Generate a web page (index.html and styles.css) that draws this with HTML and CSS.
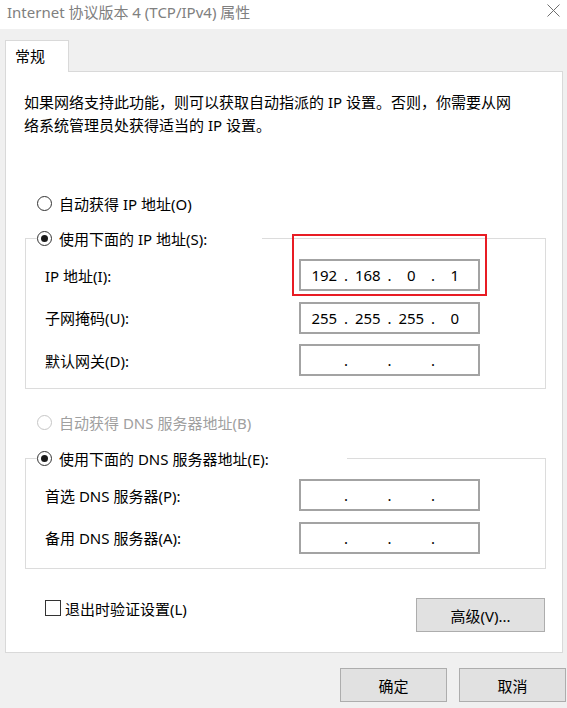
FILE: index.html
```html
<!DOCTYPE html>
<html lang="zh-CN">
<head>
<meta charset="utf-8">
<title>Internet 协议版本 4 (TCP/IPv4) 属性</title>
<link rel="stylesheet" href="styles.css">
</head>
<body>
<div class="titlebar">
  <span class="title">Internet 协议版本 4 (TCP/IPv4) 属性</span>
  <svg class="close" width="13" height="13" viewBox="0 0 13 13"><path d="M0.5 0.5 L12.5 12.5 M12.5 0.5 L0.5 12.5" stroke="#6e6e6e" stroke-width="1" fill="none"/></svg>
</div>
<div class="dialog">
  <div class="tab">常规</div>
  <div class="panel">
    <p class="desc">如果网络支持此功能，则可以获取自动指派的 IP 设置。否则，你需要从网<br>络系统管理员处获得适当的 IP 设置。</p>

    <div class="radio-row"><span class="radio"></span><span>自动获得 IP 地址(O)</span></div>

    <fieldset class="group">
      <legend class="legend legend-ip"><span class="radio checked"></span><span>使用下面的 IP 地址(S):</span></legend>
      <div class="row first">
        <span class="label">IP 地址(I):</span>
        <div class="ipbox">
          <div class="ip"><span class="seg">192</span><span class="dot">.</span><span class="seg">168</span><span class="dot">.</span><span class="seg">0</span><span class="dot">.</span><span class="seg">1</span></div>
          <div class="highlight"></div>
        </div>
      </div>
      <div class="row">
        <span class="label">子网掩码(U):</span>
        <div class="ipbox">
          <div class="ip"><span class="seg">255</span><span class="dot">.</span><span class="seg">255</span><span class="dot">.</span><span class="seg">255</span><span class="dot">.</span><span class="seg">0</span></div>
        </div>
      </div>
      <div class="row">
        <span class="label">默认网关(D):</span>
        <div class="ipbox">
          <div class="ip"><span class="seg"></span><span class="dot">.</span><span class="seg"></span><span class="dot">.</span><span class="seg"></span><span class="dot">.</span><span class="seg"></span></div>
        </div>
      </div>
    </fieldset>

    <div class="radio-row disabled second"><span class="radio"></span><span>自动获得 DNS 服务器地址(B)</span></div>

    <fieldset class="group dns">
      <legend class="legend legend-dns"><span class="radio checked"></span><span>使用下面的 DNS 服务器地址(E):</span></legend>
      <div class="row first">
        <span class="label">首选 DNS 服务器(P):</span>
        <div class="ipbox">
          <div class="ip"><span class="seg"></span><span class="dot">.</span><span class="seg"></span><span class="dot">.</span><span class="seg"></span><span class="dot">.</span><span class="seg"></span></div>
        </div>
      </div>
      <div class="row">
        <span class="label">备用 DNS 服务器(A):</span>
        <div class="ipbox">
          <div class="ip"><span class="seg"></span><span class="dot">.</span><span class="seg"></span><span class="dot">.</span><span class="seg"></span><span class="dot">.</span><span class="seg"></span></div>
        </div>
      </div>
    </fieldset>

    <div class="bottom-row">
      <label class="check"><span class="box"></span><span>退出时验证设置(L)</span></label>
      <button class="btn advanced">高级(V)...</button>
    </div>
  </div>
</div>
<div class="footer">
  <button class="btn action">确定</button>
  <button class="btn action">取消</button>
</div>
</body>
</html>
```

FILE: styles.css
```css
html, body {
  margin: 0;
  padding: 0;
}
body {
  width: 567px;
  height: 708px;
  overflow: hidden;
  background: #f0f0f0;
  font-family: "Noto Sans", "Noto Sans CJK SC", sans-serif;
  font-size: 15px;
  color: #000;
}
.titlebar {
  height: 29px;
  background: #fff;
  display: flex;
  justify-content: space-between;
  align-items: flex-start;
  padding-left: 7px;
}
.title {
  color: #808080;
  line-height: 24px;
  white-space: nowrap;
}
.close {
  margin-top: 4px;
  margin-right: 7px;
}
.dialog {
  padding: 11px 4px 0 5px;
}
.tab {
  position: relative;
  z-index: 1;
  box-sizing: border-box;
  width: 64px;
  height: 32px;
  margin-bottom: -1px;
  padding-left: 9px;
  border: 1px solid #d9d9d9;
  border-bottom: none;
  background: #fff;
  line-height: 30px;
}
.panel {
  border: 1px solid #d9d9d9;
  background: #fff;
  padding-bottom: 20px;
}
.desc {
  margin: 19px 0 0 18px;
  line-height: 23px;
  white-space: nowrap;
}
.radio-row {
  display: flex;
  align-items: center;
  height: 24px;
  margin-top: 54px;
  padding-left: 31px;
  white-space: nowrap;
}
.radio-row.second {
  margin-top: 21px;
}
.radio {
  position: relative;
  box-sizing: border-box;
  width: 15px;
  height: 15px;
  margin-right: 7px;
  border: 1px solid #333;
  border-radius: 50%;
  background: #fff;
  flex: none;
}
.radio.checked::after {
  content: "";
  position: absolute;
  left: 3px;
  top: 3px;
  width: 7px;
  height: 7px;
  border-radius: 50%;
  background: #1a1a1a;
}
.disabled {
  color: #a0a0a0;
}
.disabled .radio {
  border-color: #c6c6c6;
}
.group {
  margin: 11px 16px 0 19px;
  padding: 9px 0 12px 11px;
  border: 1px solid #dcdcdc;
  min-width: 0;
}
.group.dns {
  margin-top: 12px;
  padding-bottom: 14px;
}
.legend {
  display: flex;
  align-items: center;
  height: 24px;
  padding: 0;
  background: #fff;
  white-space: nowrap;
}
.legend-ip {
  width: 225px;
}
.legend-dns {
  width: 310px;
}
.row {
  display: flex;
  align-items: center;
  margin-top: 10.5px;
}
.row.first {
  margin-top: 0;
}
.label {
  box-sizing: border-box;
  width: 262px;
  padding-left: 8px;
  white-space: nowrap;
}
.ipbox {
  position: relative;
  box-sizing: border-box;
  width: 181px;
  height: 32px;
  border: 2px solid #a3a3a3;
  background: #fff;
  display: flex;
  justify-content: center;
  align-items: center;
}
.ip {
  display: flex;
  line-height: 26px;
}
.seg {
  width: 36px;
  text-align: center;
}
.dot {
  width: 7.5px;
  text-align: center;
}
.highlight {
  position: absolute;
  left: -9px;
  top: -27px;
  right: -9px;
  bottom: -7px;
  border: 2px solid #e81c24;
}
.bottom-row {
  display: flex;
  justify-content: space-between;
  align-items: flex-start;
  margin-top: 27.5px;
  padding: 0 17px 0 39px;
}
.check {
  display: flex;
  align-items: center;
  height: 24px;
  white-space: nowrap;
}
.box {
  box-sizing: border-box;
  width: 16px;
  height: 16px;
  margin-right: 4px;
  border: 1px solid #333;
  background: #fff;
}
.btn {
  box-sizing: border-box;
  height: 34px;
  border: 1px solid #adadad;
  background: #e1e1e1;
  font-family: inherit;
  font-size: 15px;
  color: #000;
  padding: 0;
}
.advanced {
  width: 129px;
  margin-top: 2px;
}
.footer {
  display: flex;
  justify-content: flex-end;
  gap: 12px;
  margin-top: 15px;
  padding-right: 1px;
}
.action {
  width: 107px;
}
```
